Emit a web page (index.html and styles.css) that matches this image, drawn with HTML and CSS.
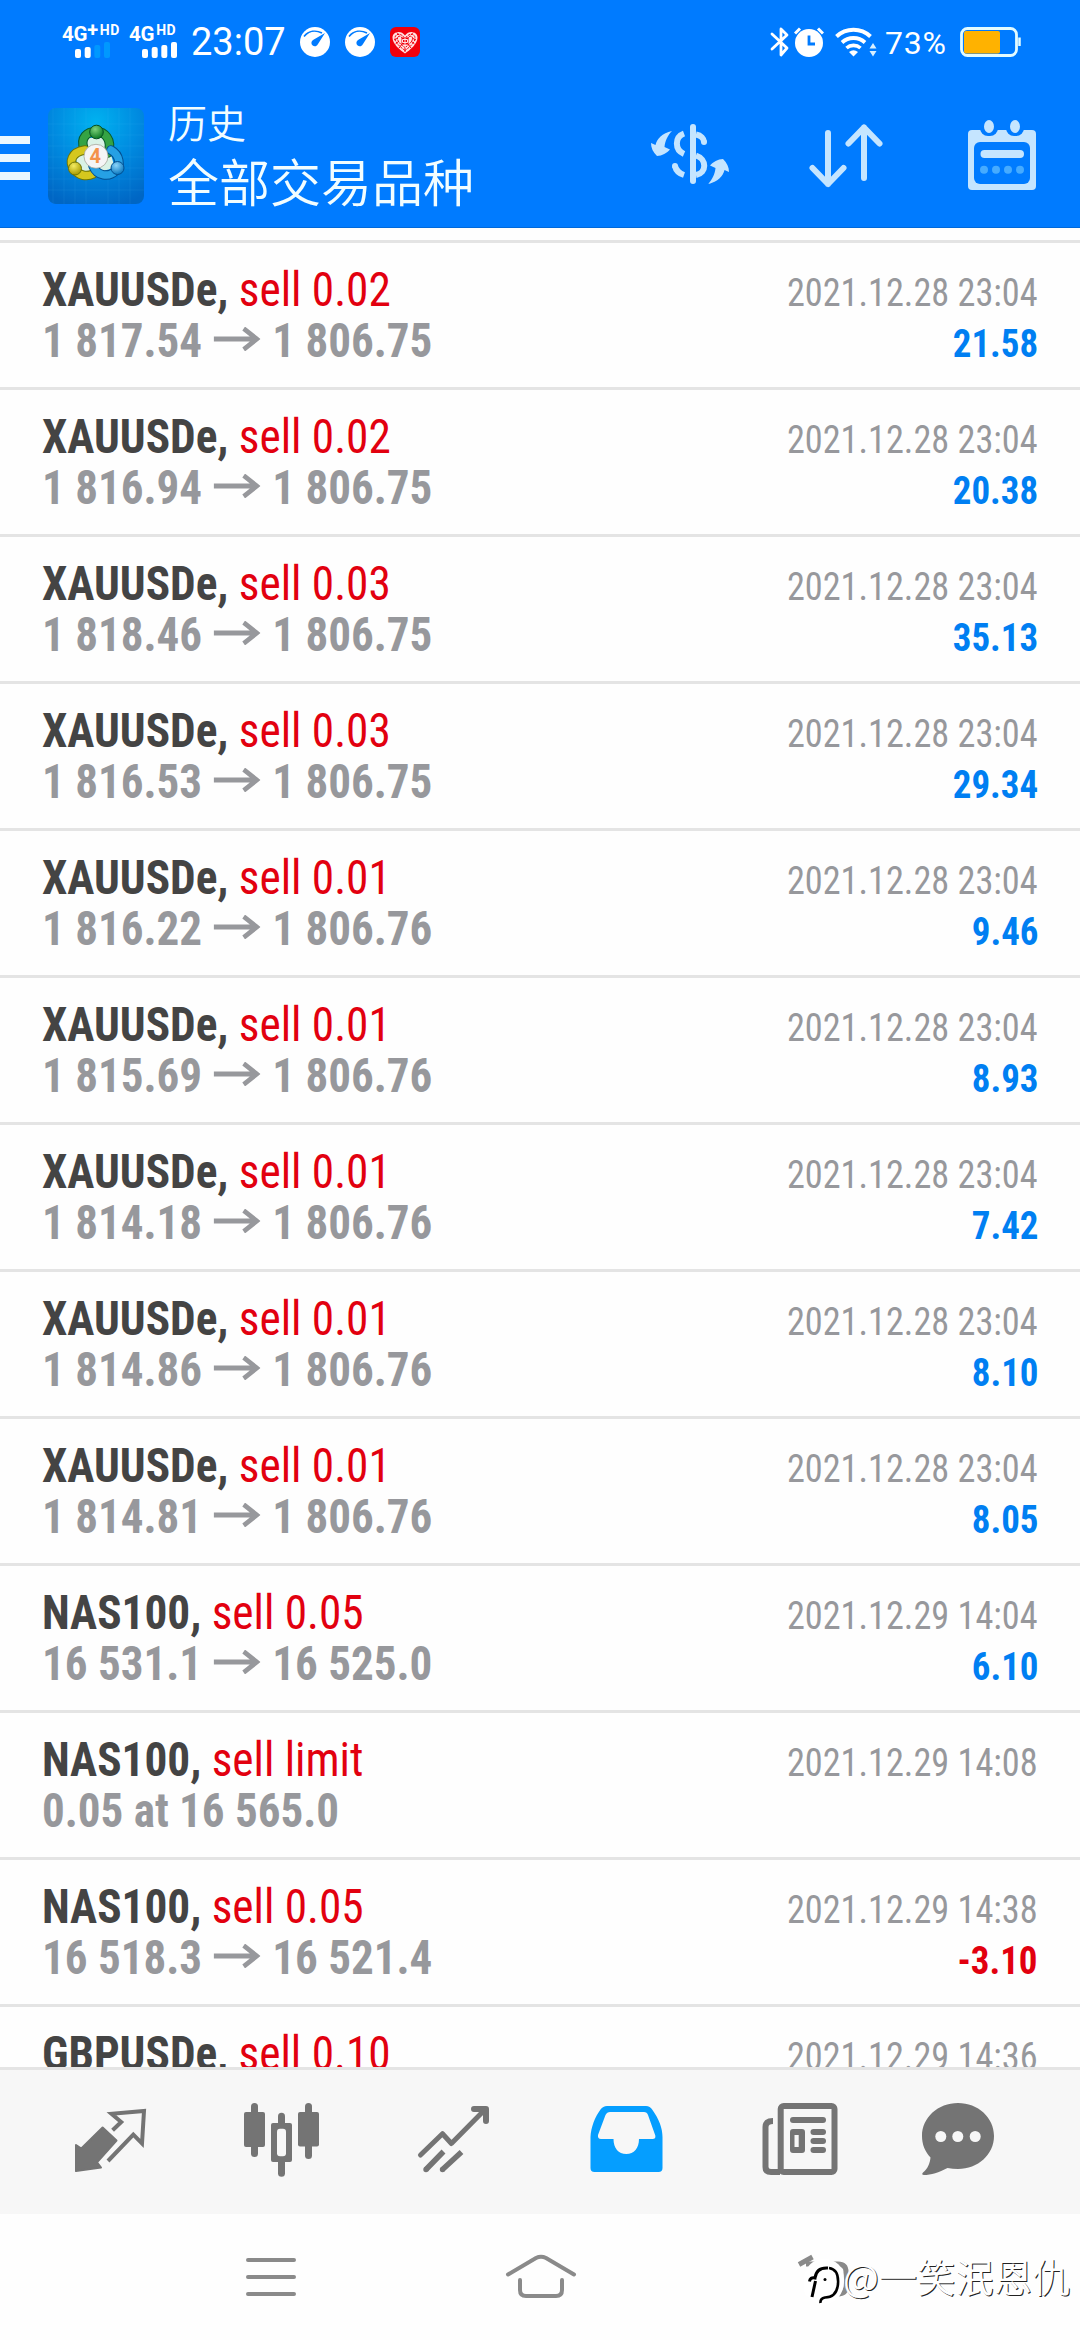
FILE: index.html
```html
<!DOCTYPE html>
<html lang="zh-CN">
<head>
<meta charset="utf-8">
<title>历史</title>
<link rel="stylesheet" href="styles.css">
</head>
<body>
<div class="screen">
  <header class="header">
    <div class="status">
      <div class="status-left">
        <div class="signal">
          <div class="net">4G<span class="plus">+</span><span class="hd">HD</span></div>
          <svg class="bars" width="36" height="16" viewBox="0 0 36 16"><g fill="#fff"><rect x="0" y="7" width="6" height="9" rx="2"/><rect x="9.7" y="5" width="6" height="11" rx="2"/></g><g fill="#0098ff"><rect x="19.3" y="3" width="6" height="13" rx="2"/><rect x="29" y="0" width="6" height="16" rx="2"/></g></svg>
        </div>
        <div class="signal signal-2">
          <div class="net">4G<span class="hd">HD</span></div>
          <svg class="bars" width="36" height="16" viewBox="0 0 36 16"><g fill="#fff"><rect x="0" y="7" width="6" height="9" rx="2"/><rect x="9.7" y="5" width="6" height="11" rx="2"/><rect x="19.3" y="3" width="6" height="13" rx="2"/><rect x="29" y="0" width="6" height="16" rx="2"/></g></svg>
        </div>
        <div class="clock">23:07</div>
        <svg class="gauge" width="30" height="30" viewBox="0 0 30 30"><circle cx="15" cy="15" r="15" fill="#fff"/><path d="M4 9.500C9 3.500 16 3 22 6" fill="none" stroke="#007bff" stroke-width="1.6"/><path d="M25 6L18 17A3.4 3.4 0 1 1 13 13Z" fill="#007bff"/></svg>
        <svg class="gauge" width="30" height="30" viewBox="0 0 30 30"><circle cx="15" cy="15" r="15" fill="#fff"/><path d="M4 9.500C9 3.500 16 3 22 6" fill="none" stroke="#007bff" stroke-width="1.6"/><path d="M25 6L18 17A3.4 3.4 0 1 1 13 13Z" fill="#007bff"/></svg>
        <svg class="heart" width="30" height="30" viewBox="0 0 30 30"><rect width="30" height="30" rx="6" fill="#f0000c"/><path d="M15 26.500C10 23 2.500 17 2.500 10.500C2.500 4.500 11 2.500 15 8.500C19 2.500 27.500 4.500 27.500 10.500C27.500 17 20 23 15 26.500Z" fill="#ffe2e2"/><g fill="none" stroke="#f0000c" stroke-width="1"><path d="M15 23.500C11 20.500 5 16 5 11C5 6.500 11 5.500 15 11.500C19 5.500 25 6.500 25 11C25 16 19 20.500 15 23.500Z" stroke-dasharray="2.500 .9"/><path d="M15 20.500C12 18.500 7.500 15 7.500 11.500C7.500 8.500 11 8 12.500 12M17.500 12C19 8 22.500 8.500 22.500 11.500C22.500 15 18 18.500 15 20.500" stroke-dasharray="2 .8"/><path d="M4 13L8 11M5.500 17L9 14M9 21L12 17M26 13L22 11M24.500 17L21 14M21 21L18 17M7 5.500L9 8M23 5.500L21 8M15 21V25"/></g><rect x="11.500" y="10.500" width="7" height="7" fill="#f0000c"/><path d="M12.500 12.500h5v3h-5ZM15 10.500v7" fill="none" stroke="#ffe2e2"/></svg>
      </div>
      <div class="status-right">
        <svg width="20" height="30" viewBox="0 0 20 30"><path d="M2 7L17 21L11 28V2L17 8L2 22" fill="none" stroke="#fff" stroke-width="2.800" stroke-linejoin="round" stroke-linecap="round"/></svg>
        <svg class="alarm" width="30" height="30" viewBox="0 0 30 30"><circle cx="15" cy="16" r="14" fill="#fff"/><path d="M1 6.500L6 1.500M29 6.500L24 1.500" stroke="#fff" stroke-width="3"/><path d="M15 8.500V17H21" fill="none" stroke="#007bff" stroke-width="2.800"/></svg>
        <svg class="wifi" width="42" height="30" viewBox="0 0 42 30"><path d="M1.500 9.500A25 25 0 0 1 35.500 9.500" fill="none" stroke="#fff" stroke-width="4"/><path d="M7 15.500A17 17 0 0 1 30 15.500" fill="none" stroke="#fff" stroke-width="3.800"/><path d="M11.500 21A10.500 10.500 0 0 1 25.500 21" fill="none" stroke="#fff" stroke-width="3.600"/><path d="M14 25Q18.500 21.500 23 25L18.500 29.500Z" fill="#fff"/><path d="M34.500 21.500L38 16L41.500 21.500ZM34.500 24L38 29.500L41.500 24Z" fill="#d8efff"/></svg>
        <div class="percent">73%</div>
        <svg class="battery" width="61" height="30" viewBox="0 0 61 30"><rect x="1.500" y="1.500" width="55" height="27" rx="6" fill="none" stroke="#e2fbff" stroke-width="2.800"/><rect x="4" y="4" width="36" height="22.500" rx="2" fill="#ffb200"/><path d="M59.500 10.500V19" stroke="#e2fbff" stroke-width="2.500"/></svg>
      </div>
    </div>
    <div class="toolbar">
      <div class="menu"><i></i><i></i><i></i></div>
      <svg class="logo" width="96" height="96" viewBox="0 0 96 96">
        <defs>
          <radialGradient id="bg" cx=".5" cy=".15" r=".9"><stop offset="0" stop-color="#00b2f0"/><stop offset=".5" stop-color="#008ae0"/><stop offset="1" stop-color="#0066c4"/></radialGradient>
          <radialGradient id="g" cx=".4" cy=".3" r=".7"><stop offset="0" stop-color="#7ed27c"/><stop offset="1" stop-color="#0c7a24"/></radialGradient>
          <radialGradient id="y" cx=".4" cy=".3" r=".7"><stop offset="0" stop-color="#f4ec62"/><stop offset="1" stop-color="#a89a00"/></radialGradient>
          <radialGradient id="b" cx=".4" cy=".3" r=".7"><stop offset="0" stop-color="#8bd4fa"/><stop offset="1" stop-color="#0a78c0"/></radialGradient>
        </defs>
        <rect width="96" height="96" rx="8" fill="url(#bg)"/>
        <path d="M5 0V96M16 0V96M27 0V96M38 0V96M60 0V96M71 0V96M82 0V96M0 16H96M0 27H96M0 38H96M0 49H96M0 60H96M0 71H96M0 82H96" stroke="#4cc4ff" stroke-opacity=".1"/>
        <path d="M38 30H58L67 60L50 64H30L28 50Z" fill="#d9f2e6"/>
        <g stroke-linecap="round" fill="none">
          <path d="M36.500 42C31 29 40 23.500 48 23.500C56 23.500 65 31 60 45" stroke="#075b2c" stroke-width="9.500"/>
          <path d="M36.500 42C31 29 40 23.500 48 23.500C56 23.500 65 31 60 45" stroke="#35a344" stroke-width="7.500"/>
          <path d="M37 42C23 44 21 54 26 61C31 68 39 69 45 66" stroke="#6d7405" stroke-width="9.500"/>
          <path d="M37 42C23 44 21 54 26 61C31 68 39 69 45 66" stroke="#d5c71e" stroke-width="7.500"/>
          <path d="M63 42C72 47 73 58 68 62.500C61 70 49 68 45 58" stroke="#034f91" stroke-width="9.500"/>
          <path d="M63 42C72 47 73 58 68 62.500C61 70 49 68 45 58" stroke="#26a0e4" stroke-width="7.500"/>
        </g>
        <circle cx="48.500" cy="24" r="6.800" fill="url(#g)" stroke="#064f22"/>
        <circle cx="27" cy="60.500" r="6.500" fill="url(#y)" stroke="#6d7405"/>
        <circle cx="69.500" cy="60" r="6.500" fill="url(#b)" stroke="#034f91"/>
        <circle cx="48" cy="48.300" r="12" fill="#f5f5f6" stroke="#9b9b8e" stroke-width=".7"/>
        <text x="47.300" y="55.300" text-anchor="middle" class="logo-num">4</text>
      </svg>
      <div class="titles">
        <div class="subtitle">历史</div>
        <div class="title">全部交易品种</div>
      </div>
      <div class="actions">
        <svg width="90" height="80" viewBox="645 115 90 80"><g fill="none" stroke="#c5e5ff" stroke-width="6"><path d="M693 127V181" stroke-linecap="round"/><path d="M684 133.500C674.500 137 674.500 150 684 154M684 175C679.500 173.500 676 170.500 675 166"/><path d="M696 134.500C701 135.500 704 138.500 704 142"/><path d="M696 155.500C707 159 707 173 696 175"/></g><circle cx="704" cy="142" r="3" fill="#c5e5ff"/><circle cx="675" cy="166" r="3" fill="#c5e5ff"/><g fill="#c5e5ff"><path d="M672 131C662 133 657 139 655.500 145L651 143C651 148 653 152 657 156C662 156 667 153 670 149.500L664.500 147C665 141 668 135 672 131Z"/><path d="M708 184C718 182 723 176 724.500 170L729 172C729 167 727 163 723 159C718 159 713 162 710 165.500L715.500 168C715 174 712 180 708 184Z"/></g></svg>
        <svg class="sort" width="80" height="80" viewBox="806 115 80 80"><path d="M828 133V184M812.500 168L828 184L843.500 168M864 178V127.500M848.500 143.500L864 127.500L879.500 143.500" fill="none" stroke="#c5e5ff" stroke-width="6" stroke-linecap="round" stroke-linejoin="round"/></svg>
        <svg class="calendar" width="70" height="80" viewBox="967 115 70 80"><rect x="968" y="130" width="68" height="60" rx="4" fill="#c5e5ff"/><rect x="974" y="142" width="56" height="42" rx="6" fill="#007bff"/><rect x="980" y="118" width="18" height="18" rx="8" fill="#007bff"/><rect x="1006" y="118" width="18" height="18" rx="8" fill="#007bff"/><ellipse cx="989" cy="126.500" rx="5" ry="6.500" fill="#c5e5ff"/><ellipse cx="1015" cy="126.500" rx="5" ry="6.500" fill="#c5e5ff"/><rect x="980.500" y="150" width="43.500" height="8" rx="4" fill="#c5e5ff"/><g fill="#46abff"><circle cx="984" cy="169.700" r="4"/><circle cx="996" cy="169.700" r="4"/><circle cx="1008" cy="169.700" r="4"/><circle cx="1020" cy="169.700" r="4"/></g></svg>
      </div>
    </div>
  </header>

  <main class="list" id="list"></main>

  <nav class="tabs">
    <svg width="80" height="80" viewBox="70 100 80 80"><path d="M76 145L81.300 148.500L102.600 127.500L116.500 140.500L97 162.300L101 167.500L76 171Z" fill="#747474" stroke="#747474" stroke-width="2" stroke-linejoin="round"/><path d="M112.600 130.300L121.200 122L111.500 113.800L144 111L142 143.500L133.300 134.700L108 161" fill="none" stroke="#747474" stroke-width="4"/></svg>
    <svg width="80" height="80" viewBox="242 100 80 80"><g fill="#747474"><rect x="251" y="103" width="7" height="54" rx="3.500"/><rect x="244" y="112" width="21" height="35" rx="2"/><rect x="278" y="112.700" width="7" height="64" rx="3.500"/><rect x="271" y="123" width="21" height="39" rx="2"/><rect x="305" y="103" width="7" height="56" rx="3.500"/><rect x="298" y="112" width="21" height="34.500" rx="2"/></g><rect x="277" y="128.700" width="9" height="27.500" rx="3" fill="#f7f7f7"/></svg>
    <svg width="80" height="80" viewBox="414 100 80 80"><g fill="none" stroke="#747474"><path d="M420.500 155L442.500 133.700L451.400 143.500L485 109.500" stroke-width="5" stroke-linecap="round" stroke-linejoin="round"/><path d="M474 109H486V121" stroke-width="6" stroke-linecap="round" stroke-linejoin="round"/><path d="M426 169.500L443.500 151.500M442.500 169.500L461.500 152" stroke-width="5.500"/></g><circle cx="426" cy="169.500" r="2.700" fill="#747474"/><circle cx="442.500" cy="169.500" r="2.700" fill="#747474"/></svg>
    <svg width="80" height="80" viewBox="586 100 80 80"><path fill-rule="evenodd" fill="#059eff" d="M607 106H646Q650 106 652.500 110C659 119 662.500 128 662.500 137V168Q662.500 172 658.500 172H594.500Q590.500 172 590.500 168V137C591 127 595 117 600.500 109.500Q603 106 607 106ZM610 112Q607 112 605.500 115L598 135Q597.500 139 601 139H613.500C613.500 148 618.500 154 626.300 154C634 154 639 148 639 139H652.500Q656 139 655.300 135.500L648 115Q647 112 644 112Z"/></svg>
    <svg class="news" width="80" height="80" viewBox="760 100 80 80"><g fill="none" stroke="#747474" stroke-width="6"><rect x="780.700" y="106" width="53.800" height="66" rx="3"/><path d="M773 121Q765.500 121 765.500 127V167Q765.500 172 771 172H780"/></g><g fill="#747474"><rect x="790" y="117" width="36" height="6" rx="3"/><path fill-rule="evenodd" d="M793 129h9q3 0 3 3v18q0 3-3 3h-9q-3 0-3-3v-18q0-3 3-3ZM794.500 135v12h4.200v-12Z"/><rect x="810.500" y="129" width="15.500" height="6" rx="3"/><rect x="810.500" y="138" width="15.500" height="6" rx="3"/><rect x="810.500" y="147" width="15.500" height="6" rx="3"/></g></svg>
    <svg class="chat" width="80" height="80" viewBox="918 100 80 80"><path fill="#747474" d="M958 103C978 103 994 117.500 994 136C994 154.500 978 169 958 169C954.500 169 951 168.600 947.500 168C939 172.500 931 175 924 175Q921 174.500 923 172.500C928 168.500 930 163 930.500 157.500C925 151.500 922 144.500 922 136C922 117.500 938 103 958 103Z"/><g fill="#f7f7f7"><circle cx="940.800" cy="136.500" r="5.500"/><circle cx="957.800" cy="136.500" r="5.500"/><circle cx="975.200" cy="136.500" r="5.500"/></g></svg>
  </nav>

  <footer class="sysnav">
    <svg width="60" height="50" viewBox="241 252 60 50"><path d="M248 260H294M248 277H294M248 294H294" stroke="#8a8a8a" stroke-width="4" stroke-linecap="round"/></svg>
    <svg width="80" height="50" viewBox="501 252 80 50"><path d="M508 274.500L536 258Q541 255.500 546 258L574 274.500M520 280V290Q520 296 526 296H556Q562 296 562 290V280" fill="none" stroke="#8a8a8a" stroke-width="4" stroke-linecap="round" stroke-linejoin="round"/></svg>
    <svg width="60" height="50" viewBox="791 252 60 50"><path d="M799 264.500L812.500 257" stroke="#8a8a8a" stroke-width="5"/><path d="M806 264H838Q846 264 846 272V286Q846 294 838 294H808" fill="none" stroke="#8a8a8a" stroke-width="5"/></svg>
    <div class="watermark">
      <svg width="44" height="52" viewBox="802 2254 44 52"><path d="M804 2290C802 2270 810 2259 824 2259C837 2259 845 2268 844 2282C843 2297 835 2303 820 2306L806 2296Z" fill="#fff"/><path d="M812 2297L815.500 2281M809.500 2281.500Q810 2277 815 2278C816 2270 821 2267.500 828 2268" fill="none" stroke="#000" stroke-width="3"/><path d="M829 2268C837 2269 838.500 2277 838 2284C837 2294 832 2297.500 825 2297.500Q820 2298.500 820.500 2303" fill="none" stroke="#000" stroke-width="2.600"/><circle cx="825" cy="2279.500" r="1.500"/></svg>
      <span>@一笑泯恩仇</span>
    </div>
  </footer>
</div>
<script src="app.js"></script>
</body>
</html>
```
FILE: styles.css
```css
* { box-sizing: border-box; }
body { margin: 0; background: #fff; font-family: Roboto, "Noto Sans CJK SC", sans-serif; }
svg { display: block; flex: none; }
.screen { width: 1080px; height: 2340px; display: flex; flex-direction: column; overflow: hidden; background: #fefefe; }

.header { height: 228px; flex: none; background: #007bff; border-bottom: 1px solid #0069da; color: #fff; }
.status { height: 84px; display: flex; justify-content: space-between; padding: 0 59px 0 62px; }
.status-left, .status-right { display: flex; align-items: center; }
.signal { width: 67px; height: 34px; display: flex; flex-direction: column; justify-content: space-between; margin-top: -2px; }
.signal-2 { width: 62px; }
.net { height: 17px; display: flex; font-size: 20.5px; line-height: 20px; font-weight: 700; font-stretch: 88%; letter-spacing: -.3px; }
.plus { font-size: 20px; line-height: 12px; }
.hd { font-size: 14px; line-height: 13px; margin-left: 2px; letter-spacing: .5px; font-stretch: 100%; }
.bars { margin-left: 13px; }
.clock { width: 109px; font-size: 38px; line-height: 44px; }
.gauge { margin-right: 15px; }
.alarm { margin-left: 4px; }
.wifi { margin-left: 11px; }
.percent { font-size: 32px; line-height: 40px; margin-left: 8px; width: 75px; letter-spacing: .8px; padding-top: 2px; }

.toolbar { height: 143px; display: flex; align-items: flex-start; padding-top: 16px; }
.menu { width: 30px; margin-right: 18px; padding-top: 36px; display: flex; flex-direction: column; gap: 10px; }
.menu i { height: 8px; background: #eaf7ff; }
.logo { margin-top: 8px; }
.logo-num { font: 700 20px Roboto, sans-serif; fill: #f4924a; }
.titles { margin-left: 24px; margin-top: -2px; font-family: "Noto Sans CJK SC", sans-serif; font-weight: 350; color: #f2fdff; }
.subtitle { font-size: 39px; line-height: 46px; }
.title { font-size: 51px; line-height: 72px; }
.actions { margin-left: auto; display: flex; padding: 15px 43px 0 0; }
.sort { margin-left: 71px; }
.calendar { margin-left: 81px; }

.list { flex: 1; min-height: 0; overflow: hidden; padding-top: 12px; font-family: "Roboto Condensed", Roboto, sans-serif; }
.row { height: 147px; border-top: 3px solid #e4e4e4; padding: 21px 42px 0; }
.line { height: 51px; line-height: 51px; display: flex; justify-content: space-between; align-items: baseline; white-space: nowrap; }
.symbol { font-size: 48px; color: #444; transform: scaleX(.943); transform-origin: 0 0; }
.side { font-weight: 400; color: #e2000f; }
.price { font-size: 48px; font-weight: 700; color: #97989c; transform: scaleX(.938); transform-origin: 0 0; }
.price svg { display: inline-block; vertical-align: 6px; margin: 0 13px 0 12px; }
.time { font-size: 39px; color: #97989c; transform: scaleX(.93); transform-origin: 100% 0; }
.profit { font-size: 39px; font-weight: 700; color: #007ff2; transform: scaleX(.947); transform-origin: 100% 0; }
.loss { color: #e2000f; }

.tabs { height: 147px; flex: none; background: #f7f7f7; border-top: 3px solid #e4e4e4; display: flex; gap: 92px; padding: 30px 0 0 70px; }
.news { margin-left: 2px; }
.chat { margin-left: -14px; }
.sysnav { height: 126px; flex: none; display: grid; grid-template-columns: 60px 80px 60px; column-gap: 200px; padding: 38px 0 0 241px; position: relative; }
.sysnav svg:nth-child(3) { margin-left: 10px; }
.watermark { position: absolute; left: 802px; top: 40px; display: flex; }
.watermark span { margin: -4px 0 0 -3px; font: 350 38.300px/52px "Noto Sans CJK SC", sans-serif; color: #fff; text-shadow: 1px 1px 0 #222; white-space: nowrap; }
```
FILE: app.js
```js
const rows = [
  ["XAUUSDe", "sell 0.02", "1 817.54", "1 806.75", "2021.12.28 23:04", "21.58"],
  ["XAUUSDe", "sell 0.02", "1 816.94", "1 806.75", "2021.12.28 23:04", "20.38"],
  ["XAUUSDe", "sell 0.03", "1 818.46", "1 806.75", "2021.12.28 23:04", "35.13"],
  ["XAUUSDe", "sell 0.03", "1 816.53", "1 806.75", "2021.12.28 23:04", "29.34"],
  ["XAUUSDe", "sell 0.01", "1 816.22", "1 806.76", "2021.12.28 23:04", "9.46"],
  ["XAUUSDe", "sell 0.01", "1 815.69", "1 806.76", "2021.12.28 23:04", "8.93"],
  ["XAUUSDe", "sell 0.01", "1 814.18", "1 806.76", "2021.12.28 23:04", "7.42"],
  ["XAUUSDe", "sell 0.01", "1 814.86", "1 806.76", "2021.12.28 23:04", "8.10"],
  ["XAUUSDe", "sell 0.01", "1 814.81", "1 806.76", "2021.12.28 23:04", "8.05"],
  ["NAS100", "sell 0.05", "16 531.1", "16 525.0", "2021.12.29 14:04", "6.10"],
  ["NAS100", "sell limit", "0.05 at 16 565.0", "", "2021.12.29 14:08", ""],
  ["NAS100", "sell 0.05", "16 518.3", "16 521.4", "2021.12.29 14:38", "-3.10"],
  ["GBPUSDe", "sell 0.10", "", "", "2021.12.29 14:36", ""]
];
const arrow = '<svg width="50" height="24" viewBox="0 0 50 24"><path d="M0 12H47M32 1.500L46 12L32 22.500" fill="none" stroke="#97989c" stroke-width="4.800"/></svg>';
document.getElementById("list").innerHTML = rows.map(([symbol, side, open, close, time, profit]) => `
  <div class="row">
    <div class="line"><b class="symbol">${symbol}, <span class="side">${side}</span></b><span class="time">${time}</span></div>
    <div class="line"><span class="price">${open}${close ? arrow + close : ""}</span><span class="profit${profit[0] === "-" ? " loss" : ""}">${profit}</span></div>
  </div>`).join("");
```
